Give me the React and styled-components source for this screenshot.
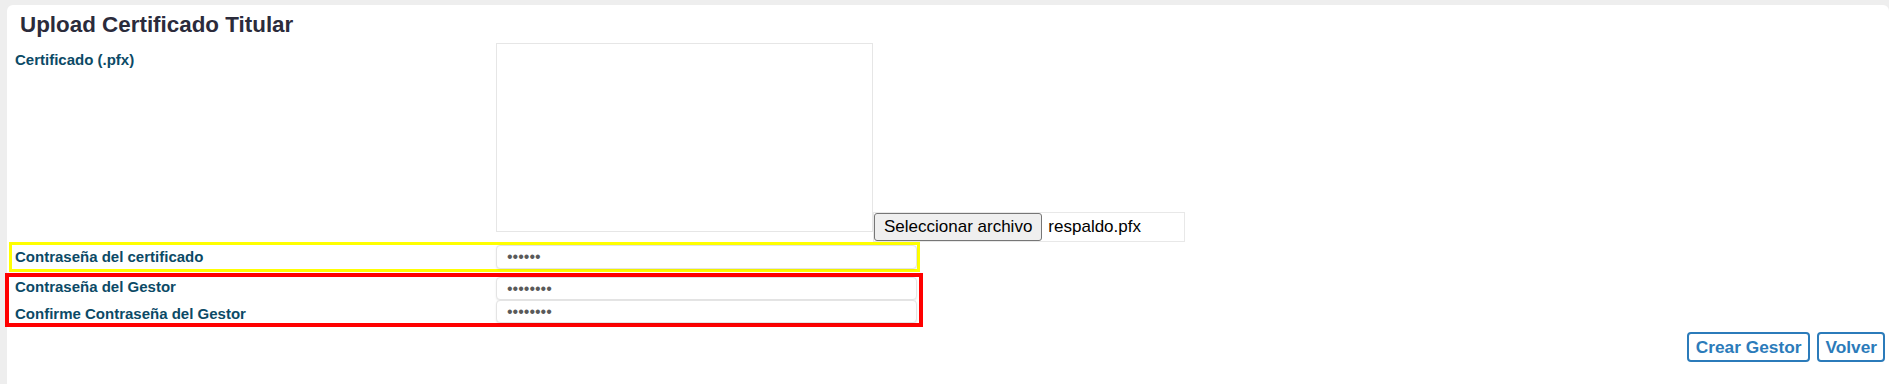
import styled, { createGlobalStyle } from 'styled-components';

const GlobalStyle = createGlobalStyle`
  body {
    margin: 0;
    background-color: #eeeeee;
    font-family: "Liberation Sans", Arial, sans-serif;
  }
`;

const Card = styled.main`
  margin: 5px 0 0 7px;
  padding: 7px 4px 40px 8px;
  min-height: 400px;
  background-color: #ffffff;
  border-radius: 6px 6px 0 0;
  box-sizing: border-box;
`;

const Title = styled.h2`
  margin: 0 0 5px 0;
  padding-left: 5px;
  font-size: 22.4px;
  line-height: 26px;
  font-weight: bold;
  color: #2b2b3b;
`;

const FieldRow = styled.div`
  display: grid;
  grid-template-columns: 481px ${(props) => props.$fieldWidth || '421px'};
  align-items: ${(props) => (props.$top ? 'start' : 'center')};
  height: ${(props) => props.$height || 'auto'};
`;

const Label = styled.label`
  font-size: 15px;
  line-height: 18px;
  font-weight: bold;
  color: #0b4a66;
  padding-top: ${(props) => props.$offset || 0}px;
`;

const UploadField = styled.div`
  display: flex;
  align-items: flex-end;
`;

const Preview = styled.div`
  width: 377px;
  height: 189px;
  margin-bottom: 10px;
  border: 1px solid #e6e6e6;
  box-sizing: border-box;
`;

const FilePicker = styled.div`
  display: flex;
  align-items: center;
  width: 312px;
  height: 30px;
  border: 1px solid #e8e8e8;
  box-sizing: border-box;
  font-size: 17px;
  color: #000;
`;

const FileButton = styled.button`
  height: 28px;
  margin: 0;
  padding: 0 9px;
  font-family: "Liberation Sans", Arial, sans-serif;
  font-size: 17px;
  color: #000;
  background-color: #efefef;
  border: 1px solid #767676;
  border-radius: 3px;
`;

const FileName = styled.span`
  margin-left: 6px;
`;

const Highlight = styled.div`
  width: fit-content;
  margin-left: ${(props) => props.$shift}px;
  margin-top: ${(props) => props.$gap || 0}px;
  padding: 0 ${(props) => props.$padRight || 0}px 0 ${(props) => props.$padLeft}px;
  border: ${(props) => props.$line}px solid ${(props) => props.$color};
`;

const PasswordInput = styled.input`
  width: 100%;
  height: ${(props) => props.$h || 24}px;
  padding: 0 10px;
  box-sizing: border-box;
  font-family: "Liberation Sans", Arial, sans-serif;
  font-size: 16px;
  color: #5a5a5a;
  background-color: #fff;
  border: 1px solid #e4e4e4;
  border-radius: 4px;
  box-shadow: 0 1px 2px rgba(0, 0, 0, 0.08);
  outline: none;
`;

const Actions = styled.div`
  display: flex;
  justify-content: flex-end;
  gap: 7px;
  margin-top: 5px;
`;

const ActionButton = styled.button`
  height: 30px;
  padding: 0 ${(props) => props.$pad || 7}px;
  font-family: "Liberation Sans", Arial, sans-serif;
  font-size: 17.3px;
  font-weight: bold;
  color: #2b7bba;
  background-color: #fff;
  border: 2px solid #2b7bba;
  border-radius: 4px;
`;

const App = () => {
  return (
    <>
      <GlobalStyle />
      <Card>
        <Title>Upload Certificado Titular</Title>

        <FieldRow $top $fieldWidth="auto">
          <Label $offset={8}>Certificado (.pfx)</Label>
          <UploadField>
            <Preview />
            <FilePicker>
              <FileButton type="button">Seleccionar archivo</FileButton>
              <FileName>respaldo.pfx</FileName>
            </FilePicker>
          </UploadField>
        </FieldRow>

        <Highlight $shift={-6} $line={3} $padLeft={3} $color="#ffff00">
          <FieldRow $height="24px">
            <Label>Contraseña del certificado</Label>
            <PasswordInput type="password" readOnly defaultValue="123456" />
          </FieldRow>
        </Highlight>

        <Highlight $shift={-10} $gap={1} $line={4} $padLeft={6} $padRight={2} $color="#ff0000">
          <FieldRow $top $height="23px">
            <Label $offset={1}>Contraseña del Gestor</Label>
            <PasswordInput type="password" readOnly defaultValue="12345678" $h={23} />
          </FieldRow>
          <FieldRow $top $height="23px">
            <Label $offset={5}>Confirme Contraseña del Gestor</Label>
            <PasswordInput type="password" readOnly defaultValue="12345678" $h={23} />
          </FieldRow>
        </Highlight>

        <Actions>
          <ActionButton type="button" $pad={7}>Crear Gestor</ActionButton>
          <ActionButton type="button" $pad={6}>Volver</ActionButton>
        </Actions>
      </Card>
    </>
  );
};

export default App;
